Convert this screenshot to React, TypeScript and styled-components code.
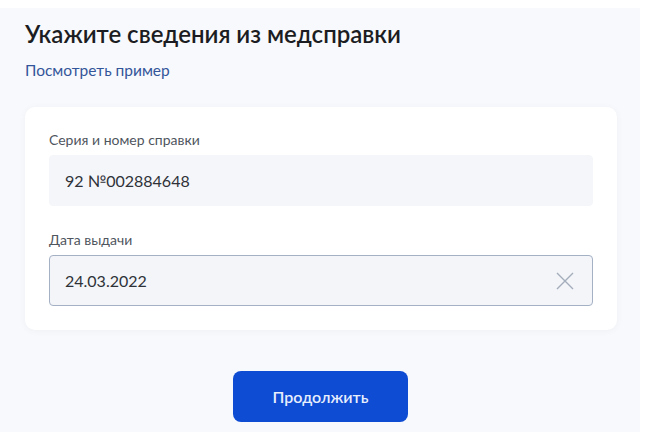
import React from "react";
import styled, { createGlobalStyle } from "styled-components";

const Global = createGlobalStyle`
  html, body { margin: 0; padding: 0; background: #ffffff; }
  body { font-family: Lato, "Noto Sans", sans-serif; }
`;

const Page = styled.main`
  margin-top: 8px;
  width: 640px;
  height: 424px;
  box-sizing: border-box;
  background: #f8f9fc;
  padding: 11px 0 0 0;
  display: flex;
  flex-direction: column;
`;

const Title = styled.h1`
  margin: 0 0 0 25px;
  font-size: 24px;
  line-height: 30px;
  font-weight: 600;
  color: #1b1d22;
`;

const Link = styled.a`
  align-self: flex-start;
  margin: 11px 0 0 25px;
  font-size: 15.5px;
  line-height: 20px;
  color: #33559a;
  text-decoration: none;
`;

const Card = styled.section`
  margin: 27px 0 0 25px;
  width: 592px;
  box-sizing: border-box;
  background: #ffffff;
  border-radius: 10px;
  box-shadow: 0 1px 6px rgba(80, 100, 140, 0.06);
  padding: 24px 24px 24px 24px;
  display: flex;
  flex-direction: column;
  gap: 25px;
`;

const Field = styled.div`
  display: flex;
  flex-direction: column;
  gap: 7px;
`;

const Label = styled.label`
  font-size: 14px;
  line-height: 17px;
  color: #4f565e;
`;

const Input = styled.div<{ $focused?: boolean }>`
  height: 51px;
  box-sizing: border-box;
  border-radius: 4px;
  background: ${(p) => (p.$focused ? "#f3f5f9" : "#f5f6fa")};
  border: 1px solid ${(p) => (p.$focused ? "#a4b1c5" : "#f5f6fa")};
  padding: 0 18px 0 15px;
  display: flex;
  align-items: center;
  justify-content: space-between;
  font-size: 16px;
  color: #2e3238;
`;

const Clear = styled.span`
  display: flex;
  width: 18px;
  height: 18px;
`;

const Actions = styled.div`
  display: flex;
  justify-content: center;
  margin-top: 41px;
`;

const Button = styled.button`
  width: 175px;
  height: 51px;
  border: none;
  border-radius: 8px;
  background: #0d4cd3;
  color: #e8eefc;
  font-family: Lato, "Noto Sans", sans-serif;
  font-size: 16px;
  font-weight: 600;
  margin-left: 1px;
`;

export default function App() {
  return (
    <>
      <Global />
      <Page>
        <Title>Укажите сведения из медсправки</Title>
        <Link href="#">Посмотреть пример</Link>
        <Card>
          <Field>
            <Label>Серия и номер справки</Label>
            <Input>92 №002884648</Input>
          </Field>
          <Field>
            <Label>Дата выдачи</Label>
            <Input $focused>
              24.03.2022
              <Clear>
                <svg width="18" height="18" viewBox="0 0 18 18" fill="none">
                  <path d="M1 1 L17 17 M17 1 L1 17" stroke="#a3adbb" strokeWidth="1.4" />
                </svg>
              </Clear>
            </Input>
          </Field>
        </Card>
        <Actions>
          <Button>Продолжить</Button>
        </Actions>
      </Page>
    </>
  );
}
